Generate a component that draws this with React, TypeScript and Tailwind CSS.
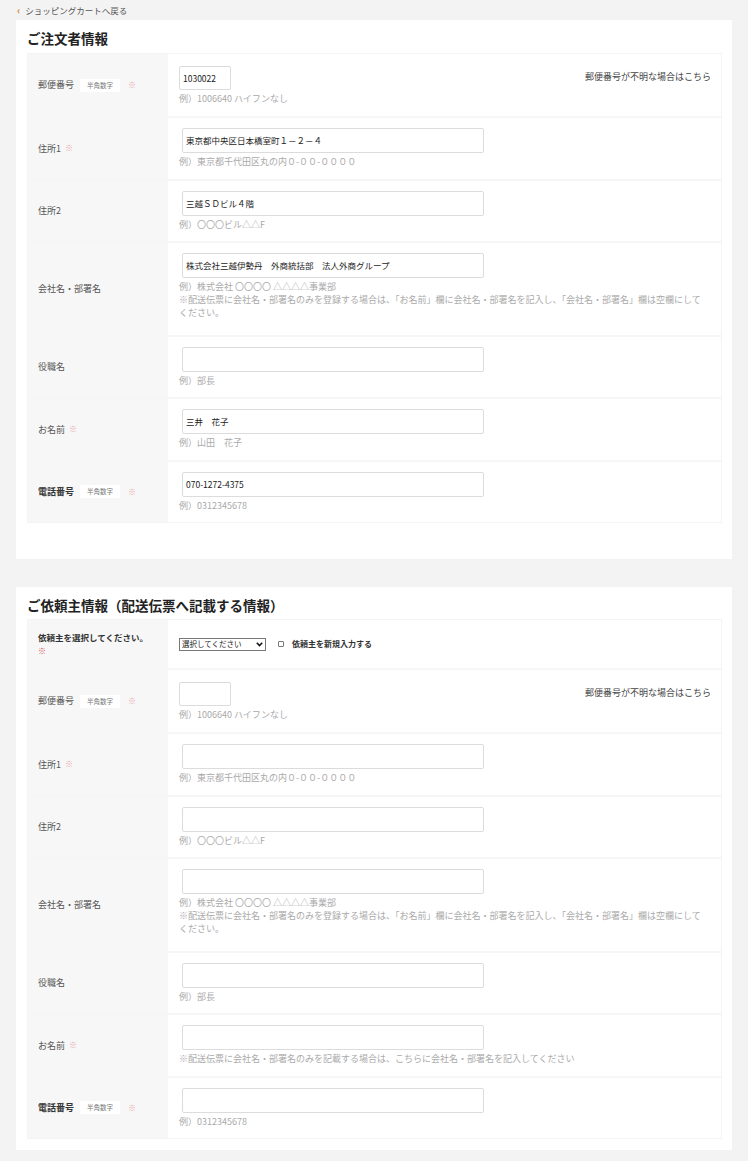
import React from "react";

const FONT = { fontFamily: '"Noto Sans CJK JP", "Noto Sans", sans-serif' };

function Badge() {
  return (
    <span className="ml-[6px] inline-block bg-white px-[7px] py-[2px] text-[6.5px] leading-[9px] text-[#777]">
      半角数字
    </span>
  );
}

function Req({ ml = "ml-[4px]" }: { ml?: string }) {
  return <span className={`${ml} text-[8px] text-[#e8a5a5]`}>※</span>;
}

function Label({ text, badge, req, bold }: { text: string; badge?: boolean; req?: boolean; bold?: boolean }) {
  return (
    <div className="flex items-center">
      <span className={`text-[9px] ${bold ? "font-bold text-[#333]" : "text-[#555]"}`}>{text}</span>
      {badge && <Badge />}
      {req && <Req ml={badge ? "ml-[8px]" : "ml-[4px]"} />}
    </div>
  );
}

function Row({
  label,
  children,
  first,
}: {
  label: React.ReactNode;
  children: React.ReactNode;
  first?: boolean;
}) {
  return (
    <div className={`flex ${first ? "" : "border-t-2 border-[#f6f6f6]"}`}>
      <div className="flex w-[140px] shrink-0 items-center bg-[#f7f7f7] pl-[10px]">{label}</div>
      <div className="flex-1 bg-white">{children}</div>
    </div>
  );
}

function Hint({ children, className = "" }: { children: React.ReactNode; className?: string }) {
  return <div className={`text-[9px] leading-[13px] text-[#aaa] ${className}`}>{children}</div>;
}

function WideInput({ value }: { value?: string }) {
  return (
    <div className="ml-[3px] flex h-[25px] w-[302px] items-center rounded-[2px] border border-[#dcdcdc] bg-white px-[3px] text-[8.5px] text-[#222]">
      {value}
    </div>
  );
}

function Field({ value, hint, note }: { value?: string; hint: string; note?: string }) {
  return (
    <div className={`px-[11px] pt-[10px] ${note ? "pb-[15.5px]" : "pb-[10.5px]"}`}>
      <WideInput value={value} />
      <div className="mt-[2px]">
        <Hint>{hint}</Hint>
        {note && <Hint className="pr-[8px]">{note}</Hint>}
      </div>
    </div>
  );
}

function Postal({ value }: { value?: string }) {
  return (
    <div className="flex justify-between pb-[11px] pl-[11px] pr-[10px] pt-[12px]">
      <div>
        <div className="flex h-[24px] w-[52px] items-center rounded-[2px] border border-[#dcdcdc] bg-white px-[3px] text-[8.5px] text-[#222]">
          {value}
        </div>
        <div className="mt-[2px]">
          <Hint>例）1006640 ハイフンなし</Hint>
        </div>
      </div>
      <div className="pt-[4px] text-[9px] leading-[13px] text-[#444]">郵便番号が不明な場合はこちら</div>
    </div>
  );
}

const NOTE =
  "※配送伝票に会社名・部署名のみを登録する場合は、「お名前」欄に会社名・部署名を記入し、「会社名・部署名」欄は空欄にしてください。";

export default function App() {
  return (
    <div className="min-h-[1161px] bg-[#f3f3f3] px-[16px] pb-[16px]" style={FONT}>
      <div className="flex h-[20px] items-center pl-[1px]">
        <span className="text-[10px] font-bold leading-none text-[#c9833a]">‹</span>
        <span className="ml-[5px] text-[8.5px] text-[#555]">ショッピングカートへ戻る</span>
      </div>

      <div className="bg-white pb-[36px] pl-[11px] pr-[10px]">
        <div className="flex h-[33px] items-center pt-[4px] text-[13.5px] font-bold text-[#222]">ご注文者情報</div>
        <div className="border border-[#f4f4f4]">
          <Row first label={<Label text="郵便番号" badge req />}>
            <Postal value="1030022" />
          </Row>
          <Row label={<Label text="住所1" req />}>
            <Field value="東京都中央区日本橋室町１－２－４" hint="例）東京都千代田区丸の内０-００-００００" />
          </Row>
          <Row label={<Label text="住所2" />}>
            <Field value="三越ＳＤビル４階" hint="例）〇〇〇ビル△△F" />
          </Row>
          <Row label={<Label text="会社名・部署名" />}>
            <Field
              value="株式会社三越伊勢丹　外商統括部　法人外商グループ"
              hint="例）株式会社 〇〇〇〇 △△△△事業部"
              note={NOTE}
            />
          </Row>
          <Row label={<Label text="役職名" />}>
            <Field hint="例）部長" />
          </Row>
          <Row label={<Label text="お名前" req />}>
            <Field value="三井　花子" hint="例）山田　花子" />
          </Row>
          <Row label={<Label text="電話番号" badge req bold />}>
            <Field value="070-1272-4375" hint="例）0312345678" />
          </Row>
        </div>
      </div>

      <div className="mt-[28px] bg-white pb-[11px] pl-[11px] pr-[10px]">
        <div className="flex h-[32px] items-center pt-[4px] text-[13.5px] font-bold text-[#222]">
          ご依頼主情報（配送伝票へ記載する情報）
        </div>
        <div className="border border-[#f4f4f4]">
          <Row
            first
            label={
              <div className="leading-[14px]">
                <div className="text-[8.5px] font-bold text-[#333]">依頼主を選択してください。</div>
                <div className="text-[8px] text-[#d04a4a]">※</div>
              </div>
            }
          >
            <div className="flex h-[48px] items-center pl-[11px]">
              <div className="flex h-[13px] w-[87px] items-center justify-between border border-[#777] bg-white pl-[2px] pr-[2px] text-[7.5px] leading-none text-[#222]">
                <span>選択してください</span>
                <svg width="7" height="5" viewBox="0 0 7 5">
                  <path d="M0.8 0.8 L3.5 3.6 L6.2 0.8" fill="none" stroke="#111" strokeWidth="1.5" />
                </svg>
              </div>
              <div className="ml-[12px] h-[6px] w-[6px] rounded-[1px] border border-[#777] bg-white" />
              <span className="ml-[8px] text-[8px] font-bold text-[#333]">依頼主を新規入力する</span>
            </div>
          </Row>
          <Row label={<Label text="郵便番号" badge req />}>
            <Postal />
          </Row>
          <Row label={<Label text="住所1" req />}>
            <Field hint="例）東京都千代田区丸の内０-００-００００" />
          </Row>
          <Row label={<Label text="住所2" />}>
            <Field hint="例）〇〇〇ビル△△F" />
          </Row>
          <Row label={<Label text="会社名・部署名" />}>
            <Field hint="例）株式会社 〇〇〇〇 △△△△事業部" note={NOTE} />
          </Row>
          <Row label={<Label text="役職名" />}>
            <Field hint="例）部長" />
          </Row>
          <Row label={<Label text="お名前" req />}>
            <Field hint="※配送伝票に会社名・部署名のみを記載する場合は、こちらに会社名・部署名を記入してください" />
          </Row>
          <Row label={<Label text="電話番号" badge req bold />}>
            <Field hint="例）0312345678" />
          </Row>
        </div>
      </div>
    </div>
  );
}
